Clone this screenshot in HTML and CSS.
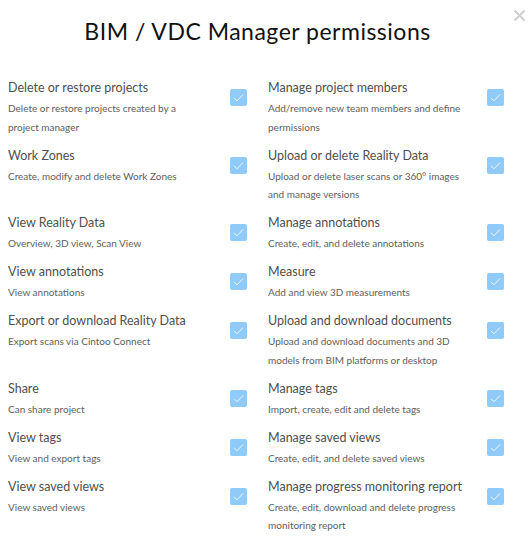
FILE: index.html
```html
<!DOCTYPE html>
<html>
<head>
<meta charset="utf-8">
<link rel="stylesheet" href="styles.css">
</head>
<body>
<div class="modal">
  <button class="close" aria-label="Close">
    <svg width="13" height="13" viewBox="0 0 13 13"><path d="M1.5 1.5 L11.5 11.5 M11.5 1.5 L1.5 11.5" stroke="#cfcfcf" stroke-width="2" fill="none"/></svg>
  </button>
  <h1 class="title">BIM / VDC Manager permissions</h1>
  <div class="grid">
    <div class="perm"><div class="text"><div class="name">Delete or restore projects</div><div class="desc">Delete or restore projects created by a project manager</div></div><span class="box"><svg viewBox="0 0 17 17"><path d="M4 8.8 L7 11.8 L13 5.5" /></svg></span></div>
    <div class="perm"><div class="text"><div class="name">Manage project members</div><div class="desc">Add/remove new team members and define permissions</div></div><span class="box"><svg viewBox="0 0 17 17"><path d="M4 8.8 L7 11.8 L13 5.5" /></svg></span></div>

    <div class="perm"><div class="text"><div class="name">Work Zones</div><div class="desc">Create, modify and delete Work Zones</div></div><span class="box"><svg viewBox="0 0 17 17"><path d="M4 8.8 L7 11.8 L13 5.5" /></svg></span></div>
    <div class="perm"><div class="text"><div class="name">Upload or delete Reality Data</div><div class="desc">Upload or delete laser scans or 360° images and manage versions</div></div><span class="box"><svg viewBox="0 0 17 17"><path d="M4 8.8 L7 11.8 L13 5.5" /></svg></span></div>

    <div class="perm"><div class="text"><div class="name">View Reality Data</div><div class="desc">Overview, 3D view, Scan View</div></div><span class="box"><svg viewBox="0 0 17 17"><path d="M4 8.8 L7 11.8 L13 5.5" /></svg></span></div>
    <div class="perm"><div class="text"><div class="name">Manage annotations</div><div class="desc">Create, edit, and delete annotations</div></div><span class="box"><svg viewBox="0 0 17 17"><path d="M4 8.8 L7 11.8 L13 5.5" /></svg></span></div>

    <div class="perm"><div class="text"><div class="name">View annotations</div><div class="desc">View annotations</div></div><span class="box"><svg viewBox="0 0 17 17"><path d="M4 8.8 L7 11.8 L13 5.5" /></svg></span></div>
    <div class="perm"><div class="text"><div class="name">Measure</div><div class="desc">Add and view 3D measurements</div></div><span class="box"><svg viewBox="0 0 17 17"><path d="M4 8.8 L7 11.8 L13 5.5" /></svg></span></div>

    <div class="perm"><div class="text"><div class="name">Export or download Reality Data</div><div class="desc">Export scans via Cintoo Connect</div></div><span class="box"><svg viewBox="0 0 17 17"><path d="M4 8.8 L7 11.8 L13 5.5" /></svg></span></div>
    <div class="perm"><div class="text"><div class="name">Upload and download documents</div><div class="desc">Upload and download documents and 3D models from BIM platforms or desktop</div></div><span class="box"><svg viewBox="0 0 17 17"><path d="M4 8.8 L7 11.8 L13 5.5" /></svg></span></div>

    <div class="perm"><div class="text"><div class="name">Share</div><div class="desc">Can share project</div></div><span class="box"><svg viewBox="0 0 17 17"><path d="M4 8.8 L7 11.8 L13 5.5" /></svg></span></div>
    <div class="perm"><div class="text"><div class="name">Manage tags</div><div class="desc">Import, create, edit and delete tags</div></div><span class="box"><svg viewBox="0 0 17 17"><path d="M4 8.8 L7 11.8 L13 5.5" /></svg></span></div>

    <div class="perm"><div class="text"><div class="name">View tags</div><div class="desc">View and export tags</div></div><span class="box"><svg viewBox="0 0 17 17"><path d="M4 8.8 L7 11.8 L13 5.5" /></svg></span></div>
    <div class="perm"><div class="text"><div class="name">Manage saved views</div><div class="desc">Create, edit, and delete saved views</div></div><span class="box"><svg viewBox="0 0 17 17"><path d="M4 8.8 L7 11.8 L13 5.5" /></svg></span></div>

    <div class="perm"><div class="text"><div class="name">View saved views</div><div class="desc">View saved views</div></div><span class="box"><svg viewBox="0 0 17 17"><path d="M4 8.8 L7 11.8 L13 5.5" /></svg></span></div>
    <div class="perm"><div class="text"><div class="name">Manage progress monitoring report</div><div class="desc">Create, edit, download and delete progress monitoring report</div></div><span class="box"><svg viewBox="0 0 17 17"><path d="M4 8.8 L7 11.8 L13 5.5" /></svg></span></div>
  </div>
</div>
</body>
</html>
```

FILE: styles.css
```css
html, body {
  margin: 0;
  padding: 0;
  background: #fff;
}
.modal {
  position: relative;
  width: 532px;
  height: 537px;
  box-sizing: border-box;
  padding: 16px 0 0 8px;
  font-family: Lato, "Liberation Sans", sans-serif;
  overflow: hidden;
}
.close {
  position: absolute;
  top: 9px;
  right: 6px;
  width: 13px;
  height: 13px;
  padding: 0;
  border: 0;
  background: none;
  display: flex;
}
.title {
  margin: 0 0 32px 0;
  padding-right: 25px;
  font-size: 23px;
  letter-spacing: 0.5px;
  line-height: 30px;
  font-weight: 400;
  color: #111;
  text-align: center;
}
.grid {
  display: grid;
  grid-template-columns: 239px 236px;
  column-gap: 21px;
  row-gap: 9.5px;
}
.perm {
  display: flex;
  align-items: flex-start;
}
.text {
  width: 196px;
}
.name {
  font-size: 12.5px;
  line-height: 20px;
  color: #4f4f4f;
}
.desc {
  font-size: 10px;
  line-height: 18.5px;
  padding-top: 1px;
  color: #5e5e5e;
}
.box {
  margin-left: auto;
  margin-top: 11px;
  width: 17px;
  height: 17px;
  border-radius: 2px;
  background: #90caf9;
  display: flex;
}
.box svg {
  width: 17px;
  height: 17px;
}
.box path {
  fill: none;
  stroke: #fff;
  stroke-opacity: 0.85;
  stroke-width: 1;
}
```
